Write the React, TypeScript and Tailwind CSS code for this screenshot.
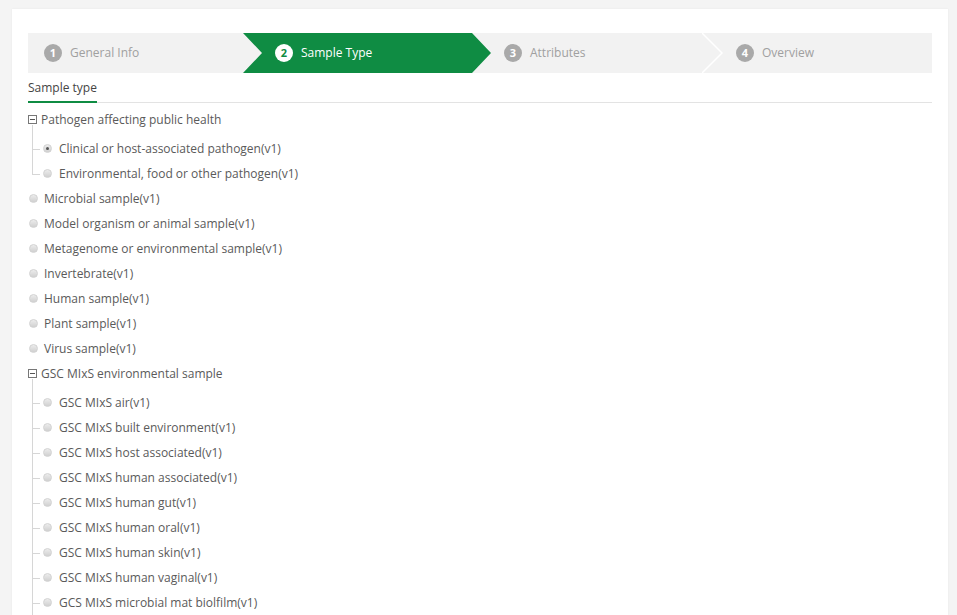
import React from "react";

type Child = { label: string; checked?: boolean };
type Node =
  | { kind: "group"; label: string; children: Child[]; more?: boolean }
  | { kind: "item"; label: string; checked?: boolean };

// list is cut by the viewport, the last group keeps going below
const tree: Node[] = [
  {
    kind: "group",
    label: "Pathogen affecting public health",
    children: [
      { label: "Clinical or host-associated pathogen(v1)", checked: true },
      { label: "Environmental, food or other pathogen(v1)" },
    ],
  },
  { kind: "item", label: "Microbial sample(v1)" },
  { kind: "item", label: "Model organism or animal sample(v1)" },
  { kind: "item", label: "Metagenome or environmental sample(v1)" },
  { kind: "item", label: "Invertebrate(v1)" },
  { kind: "item", label: "Human sample(v1)" },
  { kind: "item", label: "Plant sample(v1)" },
  { kind: "item", label: "Virus sample(v1)" },
  {
    kind: "group",
    label: "GSC MIxS environmental sample",
    more: true,
    children: [
      { label: "GSC MIxS air(v1)" },
      { label: "GSC MIxS built environment(v1)" },
      { label: "GSC MIxS host associated(v1)" },
      { label: "GSC MIxS human associated(v1)" },
      { label: "GSC MIxS human gut(v1)" },
      { label: "GSC MIxS human oral(v1)" },
      { label: "GSC MIxS human skin(v1)" },
      { label: "GSC MIxS human vaginal(v1)" },
      { label: "GCS MIxS microbial mat biolfilm(v1)" },
    ],
  },
];

function Radio({ checked }: { checked?: boolean }) {
  return (
    <span className="flex size-[9px] shrink-0 items-center justify-center rounded-full border border-[#d2d2d2] bg-gradient-to-b from-[#ececec] to-[#d0d0d0]">
      {checked && <span className="size-[3px] rounded-full bg-[#555]" />}
    </span>
  );
}

function MinusBox() {
  return (
    <span className="flex size-[9px] shrink-0 items-center justify-center border border-[#777] bg-white">
      <span className="h-px w-[5px] bg-[#555]" />
    </span>
  );
}

function Step({
  n,
  label,
  active,
  pad,
}: {
  n: number;
  label: string;
  active?: boolean;
  pad: string;
}) {
  return (
    <div className={`flex h-full items-center gap-2 ${pad}`}>
      <span
        className={
          active
            ? "flex size-[18px] items-center justify-center rounded-full bg-white text-[11px] font-bold text-[#0f8c43]"
            : "flex size-[18px] items-center justify-center rounded-full bg-[#a9a9a9] text-[11px] font-bold text-white"
        }
      >
        {n}
      </span>
      <span className={active ? "text-white" : "text-[#a0a0a0]"}>{label}</span>
    </div>
  );
}

export default function App() {
  return (
    <div className="h-[615px] overflow-hidden bg-[#f4f4f4] pl-3 pr-[9px] pt-[9px] font-['Open_Sans',sans-serif] text-[12px] text-[#5a5a5a]">
      <div className="h-[606px] overflow-hidden bg-white px-4 pt-6 shadow-[0_0_2px_rgba(0,0,0,0.06)]">
        {/* wizard steps */}
        <div className="flex h-10 bg-[#f2f2f2] text-[12px]">
          <div className="w-[226px] shrink-0">
            <Step n={1} label="General Info" pad="pl-4" />
          </div>
          <div className="-mx-[11px] w-[248px] shrink-0 bg-[#0f8c43] [clip-path:polygon(0_0,calc(100%-19px)_0,100%_50%,calc(100%-19px)_100%,0_100%,19px_50%)]">
            <Step n={2} label="Sample Type" active pad="pl-[32px]" />
          </div>
          <div className="w-[226px] shrink-0">
            <Step n={3} label="Attributes" pad="pl-[24px]" />
          </div>
          <div className="relative flex-1">
            <svg
              className="absolute -left-[4px] top-0"
              width="22"
              height="40"
              viewBox="0 0 22 40"
            >
              <polyline points="0,0 20,20 0,40" fill="none" stroke="#ffffff" strokeWidth="1.5" />
            </svg>
            <Step n={4} label="Overview" pad="pl-[30px]" />
          </div>
        </div>

        {/* tab */}
        <div className="flex border-b border-[#e3e3e3]">
          <span className="-mb-px h-[30px] border-b-2 border-[#0f8c43] pt-[6px] leading-[18px] text-[#444]">
            Sample type
          </span>
        </div>

        {/* tree */}
        <div className="pt-[4px]">
          {tree.map((node) =>
            node.kind === "item" ? (
              <div key={node.label} className="flex h-[25px] items-center gap-[6px] pl-px">
                <Radio checked={node.checked} />
                <span>{node.label}</span>
              </div>
            ) : (
              <div key={node.label}>
                <div className="flex h-[25px] items-center gap-1">
                  <MinusBox />
                  <span>{node.label}</span>
                </div>
                <div className="relative ml-[4px] pt-1">
                  <span
                    className={
                      node.more
                        ? "absolute -top-[7px] bottom-0 left-0 w-px bg-[#d6d6d6]"
                        : "absolute -top-[7px] bottom-[12px] left-0 w-px bg-[#d6d6d6]"
                    }
                  />
                  {node.children.map((c) => (
                    <div key={c.label} className="relative flex h-[25px] items-center pl-[11px]">
                      <span className="absolute left-0 top-1/2 h-px w-[8px] bg-[#d6d6d6]" />
                      <Radio checked={c.checked} />
                      <span className="ml-[7px]">{c.label}</span>
                    </div>
                  ))}
                  {node.more && <div className="h-[25px]" />}
                </div>
              </div>
            )
          )}
        </div>
      </div>
    </div>
  );
}
